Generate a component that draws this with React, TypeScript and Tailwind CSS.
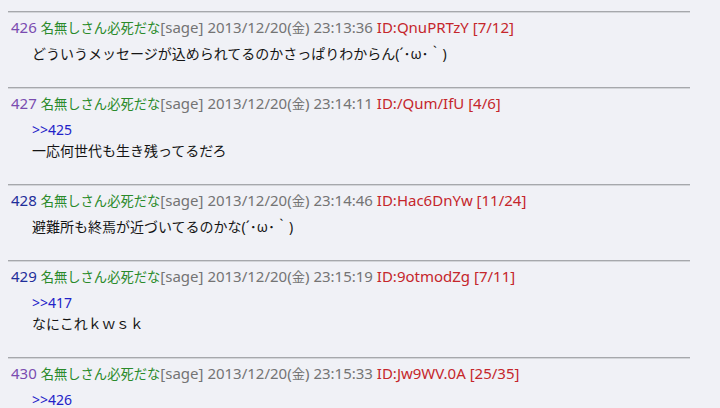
type Post = {
  no: number;
  noColor: string;
  time: string;
  id: string;
  count: string;
  anchor?: string;
  body: string;
};

const posts: Post[] = [
  {
    no: 426,
    noColor: "text-[#7a4cb0]",
    time: "23:13:36",
    id: "ID:QnuPRTzY",
    count: "[7/12]",
    body: "どういうメッセージが込められてるのかさっぱりわからん(´･ω･｀)",
  },
  {
    no: 427,
    noColor: "text-[#7a4cb0]",
    time: "23:14:11",
    id: "ID:/Qum/IfU",
    count: "[4/6]",
    anchor: ">>425",
    body: "一応何世代も生き残ってるだろ",
  },
  {
    no: 428,
    noColor: "text-[#1f2f9a]",
    time: "23:14:46",
    id: "ID:Hac6DnYw",
    count: "[11/24]",
    body: "避難所も終焉が近づいてるのかな(´･ω･｀)",
  },
  {
    no: 429,
    noColor: "text-[#1f2f9a]",
    time: "23:15:19",
    id: "ID:9otmodZg",
    count: "[7/11]",
    anchor: ">>417",
    body: "なにこれｋｗｓｋ",
  },
  {
    no: 430,
    noColor: "text-[#7a4cb0]",
    time: "23:15:33",
    id: "ID:Jw9WV.0A",
    count: "[25/35]",
    anchor: ">>426",
    body: "",
  },
];

function PostRow({ p }: { p: Post }) {
  return (
    <div>
      <div className="h-[2px] border-t border-b border-t-[#a6a8ac] border-b-[#d3d5d9]" />
      <div className="pl-[3px] pt-[4px] pb-[22px]">
        <div className="h-[20px] whitespace-nowrap text-[15px] leading-[20px]">
          <span className={p.noColor}>{p.no}</span>{" "}
          <span className="text-[13.3px] text-[#2a8a2a]">名無しさん必死だな</span>
          <span className="text-[#747474]">
            [sage] 2013/12/20(<span className="text-[13.3px]">金</span>) {p.time}
          </span>{" "}
          <span className="text-[#c5262b]">
            {p.id} {p.count}
          </span>
        </div>
        <div className="mt-[6px] pl-[21px] leading-[22px] text-[#151515]">
          {p.anchor ? (
            <div className="leading-[21px] text-[#2222c8]">{p.anchor}</div>
          ) : null}
          {p.body ? <div>{p.body}</div> : null}
        </div>
      </div>
    </div>
  );
}

export default function App() {
  return (
    <div
      className="h-[408px] w-[720px] overflow-hidden bg-[#f0f1f6] pl-[8px] pt-[11px] text-[14px]"
      style={{ fontFamily: '"Noto Sans", "Noto Sans CJK JP", sans-serif' }}
    >
      <div className="w-[682px]">
        {posts.map((p) => (
          <PostRow key={p.no} p={p} />
        ))}
      </div>
    </div>
  );
}
